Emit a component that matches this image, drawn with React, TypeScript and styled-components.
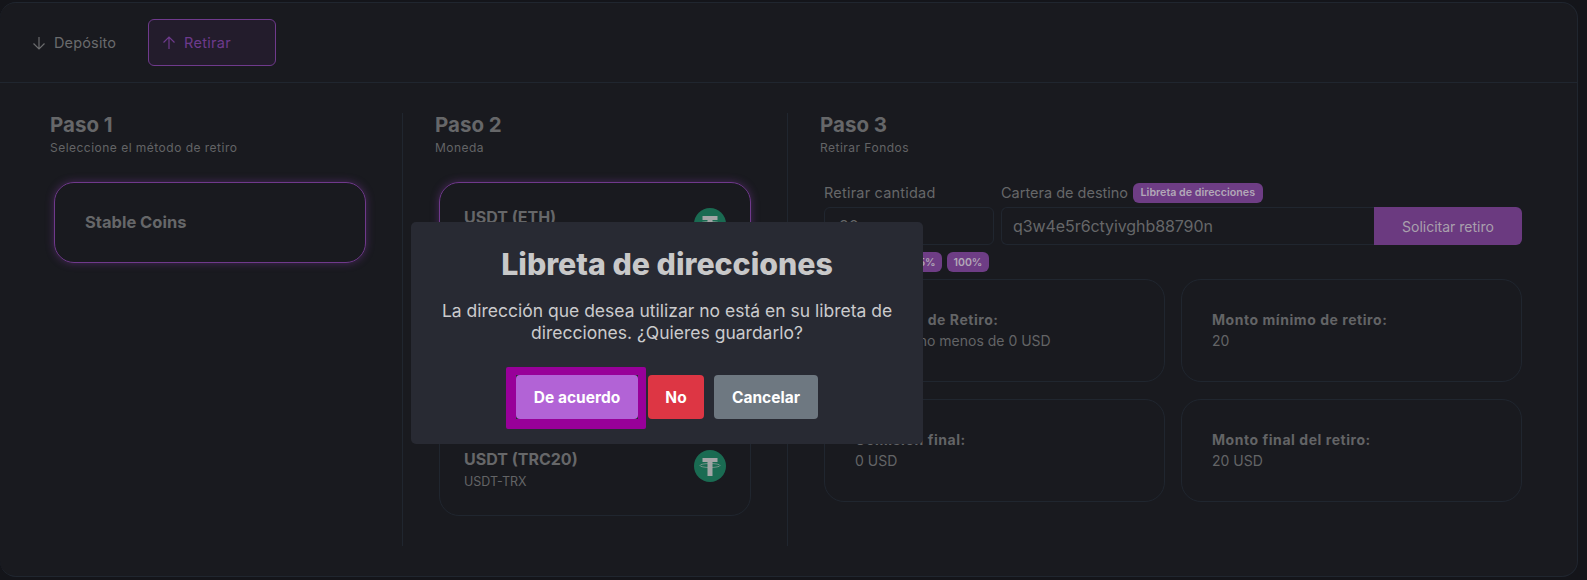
import React from 'react'
import styled, { createGlobalStyle } from 'styled-components'

const GlobalStyle = createGlobalStyle`
  html, body {
    margin: 0;
    padding: 0;
    background: #14151a;
  }
  body {
    font-family: Inter, 'Noto Sans', sans-serif;
    overflow: hidden;
  }
  * {
    box-sizing: border-box;
  }
`

const coins = [
  { name: 'USDT (ETH)', code: 'USDT-ETH' },
  { name: 'USDT (BEP20)', code: 'USDT-BSC' },
  { name: 'USDT (TRC20)', code: 'USDT-TRX' },
]

const infos = [
  { title: 'Comisión de Retiro:', value: 'Debe ser no menos de 0 USD' },
  { title: 'Monto mínimo de retiro:', value: '20' },
  { title: 'Comisión final:', value: '0 USD' },
  { title: 'Monto final del retiro:', value: '20 USD' },
]

function TetherIcon() {
  return (
    <Tether viewBox="0 0 32 32" aria-hidden="true">
      <circle cx="16" cy="16" r="16" fill="#1a6b52" />
      <path d="M8.500 8h15v4h-5v14h-5V12h-5z" fill="#a3a5a6" />
      <ellipse cx="16" cy="15.500" rx="10" ry="2" fill="none" stroke="#a3a5a6" strokeWidth="0.800" opacity="0.8" />
    </Tether>
  )
}

function ArrowDown() {
  return (
    <TabIcon viewBox="0 0 16 16" fill="none" stroke="currentColor" strokeWidth="1.200" aria-hidden="true">
      <path d="M8 2v12M2.500 8.500 8 14l5.500-5.500" />
    </TabIcon>
  )
}

function ArrowUp() {
  return (
    <TabIcon viewBox="0 0 16 16" fill="none" stroke="currentColor" strokeWidth="1.200" aria-hidden="true">
      <path d="M8 14V2M2.500 7.500 8 2l5.500 5.500" />
    </TabIcon>
  )
}

export default function App() {
  return (
    <>
      <GlobalStyle />
      <Page>
        <Tabs>
          <Tab>
            <ArrowDown />
            Depósito
          </Tab>
          <Tab $active>
            <ArrowUp />
            Retirar
          </Tab>
        </Tabs>
        <Steps>
          <Step>
            <StepTitle>Paso 1</StepTitle>
            <StepSub>Seleccione el método de retiro</StepSub>
            <MethodCard>Stable Coins</MethodCard>
          </Step>
          <Step>
            <StepTitle>Paso 2</StepTitle>
            <StepSub>Moneda</StepSub>
            <CoinList>
              {coins.map((coin, i) => (
                <CoinCard key={coin.code} $active={i === 0}>
                  <div>
                    <CoinName>{coin.name}</CoinName>
                    <CoinCode>{coin.code}</CoinCode>
                  </div>
                  <TetherIcon />
                </CoinCard>
              ))}
            </CoinList>
          </Step>
          <LastStep>
            <StepTitle>Paso 3</StepTitle>
            <StepSub>Retirar Fondos</StepSub>
            <Form>
              <AmountField>
                <FieldLabel>Retirar cantidad</FieldLabel>
                <Input defaultValue="20" />
              </AmountField>
              <WalletField>
                <FieldLabel $tight>
                  Cartera de destino
                  <Pill>Libreta de direcciones</Pill>
                </FieldLabel>
                <WalletRow>
                  <WalletInput defaultValue="q3w4e5r6ctyivghb88790n" />
                  <SubmitButton>Solicitar retiro</SubmitButton>
                </WalletRow>
              </WalletField>
            </Form>
            <Percents>
              <PercentPill>25%</PercentPill>
              <PercentPill>50%</PercentPill>
              <PercentPill>75%</PercentPill>
              <PercentPill $wide>100%</PercentPill>
            </Percents>
            <InfoGrid>
              {infos.map((info) => (
                <InfoCard key={info.title}>
                  <InfoTitle>{info.title}</InfoTitle>
                  <InfoValue>{info.value}</InfoValue>
                </InfoCard>
              ))}
            </InfoGrid>
          </LastStep>
        </Steps>
        <Modal>
          <ModalTitle>Libreta de direcciones</ModalTitle>
          <ModalText>
            La dirección que desea utilizar no está en su libreta de direcciones. ¿Quieres guardarlo?
          </ModalText>
          <ModalActions>
            <ModalButton $bg="#b263d6" $focused $w={122}>De acuerdo</ModalButton>
            <ModalButton $bg="#dd3644" $w={56}>No</ModalButton>
            <ModalButton $bg="#6e7881" $w={104}>Cancelar</ModalButton>
          </ModalActions>
        </Modal>
      </Page>
    </>
  )
}

const Page = styled.div`
  position: relative;
  width: 1578px;
  height: 575px;
  margin-top: 2px;
  background: #191a1f;
  border: 1px solid #20262f;
  border-left: 0;
  border-radius: 16px;
  overflow: hidden;
`

const Tabs = styled.div`
  display: flex;
  align-items: center;
  gap: 18px;
  height: 80px;
  padding-left: 31px;
  border-bottom: 1px solid #20262f;
`

const Tab = styled.div<{ $active?: boolean }>`
  display: flex;
  align-items: center;
  gap: 7px;
  height: 47px;
  width: ${(p) => (p.$active ? '128px' : '99px')};
  padding-left: ${(p) => (p.$active ? '12px' : '0')};
  font-size: 14.5px;
  letter-spacing: ${(p) => (p.$active ? '0.3px' : '0.15px')};
  color: ${(p) => (p.$active ? '#6d3a8c' : '#6a6b6d')};
  background: ${(p) => (p.$active ? '#231c2c' : 'transparent')};
  border: ${(p) => (p.$active ? '1px solid #6f3a8c' : '0')};
  border-radius: 6px;
`

const TabIcon = styled.svg`
  width: 16px;
  height: 16px;
`

const Steps = styled.div`
  display: grid;
  grid-template-columns: 385px 385px 1fr;
  height: 433px;
  margin-top: 30px;
  padding-left: 18px;
`

const Step = styled.section`
  padding-left: 32px;
  border-right: 1px solid #20262f;
`

const LastStep = styled.section`
  padding-left: 32px;
`

const StepTitle = styled.h3`
  margin: 0;
  font-size: 20.5px;
  font-weight: 700;
  line-height: 24px;
  color: #666769;
`

const StepSub = styled.p`
  margin: 3px 0 0;
  font-size: 12px;
  line-height: 16px;
  letter-spacing: 0.48px;
  color: #636466;
`

const MethodCard = styled.div`
  display: flex;
  align-items: center;
  width: 312px;
  height: 81px;
  margin: 26px 0 0 4px;
  padding: 0 0 2px 30px;
  font-size: 16.5px;
  font-weight: 700;
  color: #666769;
  border: 1px solid #70398c;
  border-radius: 20px;
  box-shadow: 0 0 8px rgb(130 60 165 / 45%);
`

const CoinList = styled.div`
  display: flex;
  flex-direction: column;
  gap: 29px;
  width: 312px;
  margin: 26px 0 0 4px;
`

const CoinCard = styled.div<{ $active?: boolean }>`
  display: flex;
  align-items: flex-start;
  justify-content: space-between;
  height: 92px;
  padding: 24px 24px 0;
  border: 1px solid ${(p) => (p.$active ? '#70398c' : '#20262f')};
  border-radius: 20px;
  box-shadow: ${(p) => (p.$active ? '0 0 8px rgb(130 60 165 / 45%)' : 'none')};
`

const CoinName = styled.div`
  font-size: 16px;
  font-weight: 700;
  line-height: 20px;
  color: #666769;
`

const CoinCode = styled.div`
  margin-top: 5px;
  font-size: 12.5px;
  line-height: 16px;
  color: #636466;
`

const Tether = styled.svg`
  display: block;
  width: 32px;
  height: 32px;
  margin-top: 1px;
`

const Form = styled.div`
  display: flex;
  gap: 7px;
  width: 698px;
  margin: 21px 0 0 4px;
`

const AmountField = styled.div`
  width: 170px;
`

const WalletField = styled.div`
  flex: 1;
`

const FieldLabel = styled.div<{ $tight?: boolean }>`
  display: flex;
  align-items: center;
  height: 31px;
  font-size: 14.5px;
  letter-spacing: ${(p) => (p.$tight ? '0' : '0.2px')};
  color: #666769;
`

const Input = styled.input`
  display: block;
  width: 100%;
  height: 38px;
  padding: 0 14px;
  margin-top: -1px;
  font: inherit;
  font-size: 16px;
  color: #666769;
  background: transparent;
  border: 1px solid #20262f;
  border-radius: 6px;
  outline: none;
`

const WalletRow = styled.div`
  display: flex;
  height: 38px;
  margin-top: -1px;
`

const WalletInput = styled(Input)`
  flex: 1;
  margin-top: 0;
  padding-left: 11px;
  letter-spacing: -0.08px;
  border-right: 0;
  border-radius: 6px 0 0 6px;
`

const SubmitButton = styled.button`
  width: 148px;
  font: inherit;
  font-size: 14px;
  color: #a9a0ad;
  background: #6b3a80;
  border: 0;
  border-radius: 0 6px 6px 0;
`

const Pill = styled.span`
  display: inline-flex;
  align-items: center;
  height: 20px;
  margin-left: 5px;
  padding: 0 7.500px;
  font-size: 10.7px;
  font-weight: 600;
  white-space: nowrap;
  color: #b2a8b7;
  background: #6e3d85;
  border-radius: 6px;
`

const Percents = styled.div`
  display: flex;
  gap: 5px;
  margin: 7px 0 0 4px;
`

const PercentPill = styled.span<{ $wide?: boolean }>`
  display: flex;
  align-items: center;
  justify-content: center;
  width: ${(p) => (p.$wide ? '42px' : '36px')};
  height: 20px;
  font-size: 10.5px;
  font-weight: 600;
  color: #b2a8b7;
  background: #6e3d85;
  border-radius: 6px;
`

const InfoGrid = styled.div`
  display: grid;
  grid-template-columns: 341px 341px;
  grid-auto-rows: 103px;
  gap: 17px 16px;
  margin: 7px 0 0 4px;
`

const InfoCard = styled.div`
  display: flex;
  flex-direction: column;
  justify-content: center;
  padding: 0 30px;
  border: 1px solid #20262f;
  border-radius: 20px;
`

const InfoTitle = styled.div`
  font-size: 14px;
  font-weight: 700;
  line-height: 20px;
  letter-spacing: 0.55px;
  color: #636466;
`

const InfoValue = styled.div`
  margin-top: 1px;
  font-size: 14px;
  line-height: 20px;
  color: #636466;
`

const Modal = styled.div`
  position: absolute;
  top: 219px;
  left: 411px;
  width: 512px;
  height: 222px;
  padding-top: 22px;
  text-align: center;
  background: #282a33;
  border-radius: 5px;
`

const ModalTitle = styled.h2`
  margin: 0;
  font-size: 30.300px;
  font-weight: 800;
  line-height: 40px;
  color: #c8c8c9;
`

const ModalText = styled.p`
  margin: 16px 20px 0;
  font-size: 17.5px;
  line-height: 22px;
  color: #cbcbcd;
`

const ModalActions = styled.div`
  display: flex;
  justify-content: center;
  gap: 10px;
  margin-top: 31px;
`

const ModalButton = styled.button<{ $bg: string; $w: number; $focused?: boolean }>`
  position: relative;
  width: ${(p) => p.$w}px;
  height: 44px;
  padding: 0;
  font: inherit;
  font-size: 15.500px;
  font-weight: 700;
  color: #fff;
  background: ${(p) => p.$bg};
  border: 0;
  border-radius: 4px;

  ${(p) =>
    p.$focused
      ? `&::after {
          content: '';
          position: absolute;
          inset: -8px -8px -10px -10px;
          border: solid #980099;
          border-width: 8px 8px 10px 10px;
          border-radius: 2px;
        }`
      : ''}
`
